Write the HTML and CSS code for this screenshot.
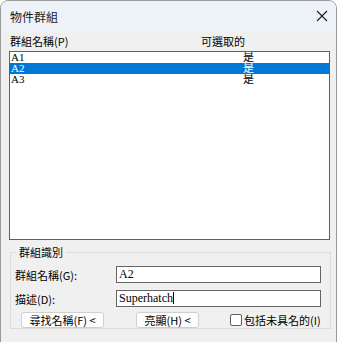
FILE: index.html
```
<!DOCTYPE html>
<html lang="zh-Hant">
<head>
    <meta charset="UTF-8">
    <title>物件群組</title>
    <link rel="stylesheet" href="styles.css">
</head>
<body>
    <div class="dialog">
        <div class="titleBar">
            <span class="titleText">物件群組</span>
            <svg class="closeIcon" width="12" height="12" viewBox="0 0 12 12">
                <path d="M1 1 L11 11 M11 1 L1 11" stroke="#1a1a1a" stroke-width="1.1" fill="none"/>
            </svg>
        </div>

        <div class="dialogBody">
            <div class="listHeader">
                <span class="colName">群組名稱(P)</span>
                <span class="colSel">可選取的</span>
            </div>
            <div class="groupList">
                <div class="listRow"><span class="colName">A1</span><span class="colSel">是</span></div>
                <div class="listRow selected"><span class="colName">A2</span><span class="colSel">是</span></div>
                <div class="listRow"><span class="colName">A3</span><span class="colSel">是</span></div>
            </div>

            <fieldset class="idGroup">
                <legend>群組識別</legend>
                <div class="fieldRow">
                    <label for="groupName">群組名稱(G):</label>
                    <div class="textBox" id="groupName">A2</div>
                </div>
                <div class="fieldRow">
                    <label for="groupDesc">描述(D):</label>
                    <div class="textBox" id="groupDesc">Superhatch<span class="caret"></span></div>
                </div>
                <div class="buttonRow">
                    <button class="dlgButton findButton">尋找名稱(F) &lt;</button>
                    <button class="dlgButton highlightButton">亮顯(H) &lt;</button>
                    <label class="checkItem"><span class="checkBox"></span>包括未具名的(I)</label>
                </div>
            </fieldset>
        </div>
    </div>
</body>
</html>
```
FILE: styles.css
```
body {
    margin: 0;
    background: #ffffff;
    font-family: "Noto Sans CJK TC", "Noto Sans", sans-serif;
    font-size: 11px;
    color: #000;
}
.dialog {
    width: 335px;
    height: 341px;
    border: 1px solid #9a9a9a;
    border-radius: 8px 8px 0 0;
    background: #f0f0f0;
    overflow: hidden;
}
.titleBar {
    height: 30px;
    background: #eef3f9;
    display: flex;
    align-items: center;
    justify-content: space-between;
    padding: 0 8px 0 9px;
}
.titleText {
    font-size: 12px;
    color: #1a1a1a;
}
.dialogBody {
    padding: 0 6px 0 8px;
}
.listHeader {
    display: flex;
    height: 20px;
    align-items: center;
    line-height: 12px;
}
.colName {
    width: 191px;
    padding-left: 1px;
}
.colSel {
    flex: 1;
}
.groupList {
    height: 187px;
    border: 1px solid #0078d7;
    background: #fff;
    font-family: "Liberation Serif", "Noto Sans CJK TC", serif;
    font-size: 11px;
}
.listRow {
    display: flex;
    height: 11px;
    line-height: 11px;
    overflow: hidden;
}
.listRow .colName {
    width: 232px;
}
.listRow.selected {
    background: #0078d7;
    color: #fff;
}
.idGroup {
    margin: 6px 0 0 1px;
    padding: 8px 9px 0 4px;
    border: 1px solid #dcdcdc;
    height: 73px;
}
.idGroup legend {
    padding: 0 3px;
    margin-left: 1px;
    line-height: 12px;
}
.fieldRow {
    display: flex;
    align-items: center;
}
.fieldRow + .fieldRow {
    margin-top: 7px;
}
.fieldRow label {
    width: 101px;
}
.textBox {
    flex: 1;
    height: 15px;
    border: 1px solid #646464;
    background: #fff;
    font-family: "Liberation Serif", serif;
    font-size: 12px;
    line-height: 15px;
    padding-left: 2px;
}
.caret {
    display: inline-block;
    width: 1px;
    height: 12px;
    background: #000;
    vertical-align: -2px;
}
.buttonRow {
    display: flex;
    align-items: center;
    margin-top: 5px;
    white-space: nowrap;
}
.dlgButton {
    height: 16px;
    border: 1px solid #cfcfcf;
    border-radius: 3px;
    background: #fdfdfd;
    font-family: "Noto Sans CJK TC", sans-serif;
    font-size: 11px;
    line-height: 14px;
    padding: 0;
}
.findButton {
    width: 83px;
    margin-left: 6px;
}
.highlightButton {
    width: 63px;
    margin-left: 32px;
}
.checkItem {
    display: flex;
    align-items: center;
    margin-left: 31px;
}
.checkBox {
    width: 10px;
    height: 10px;
    border: 1px solid #5f5f5f;
    border-radius: 2px;
    background: #fff;
    margin-right: 2px;
}
```
